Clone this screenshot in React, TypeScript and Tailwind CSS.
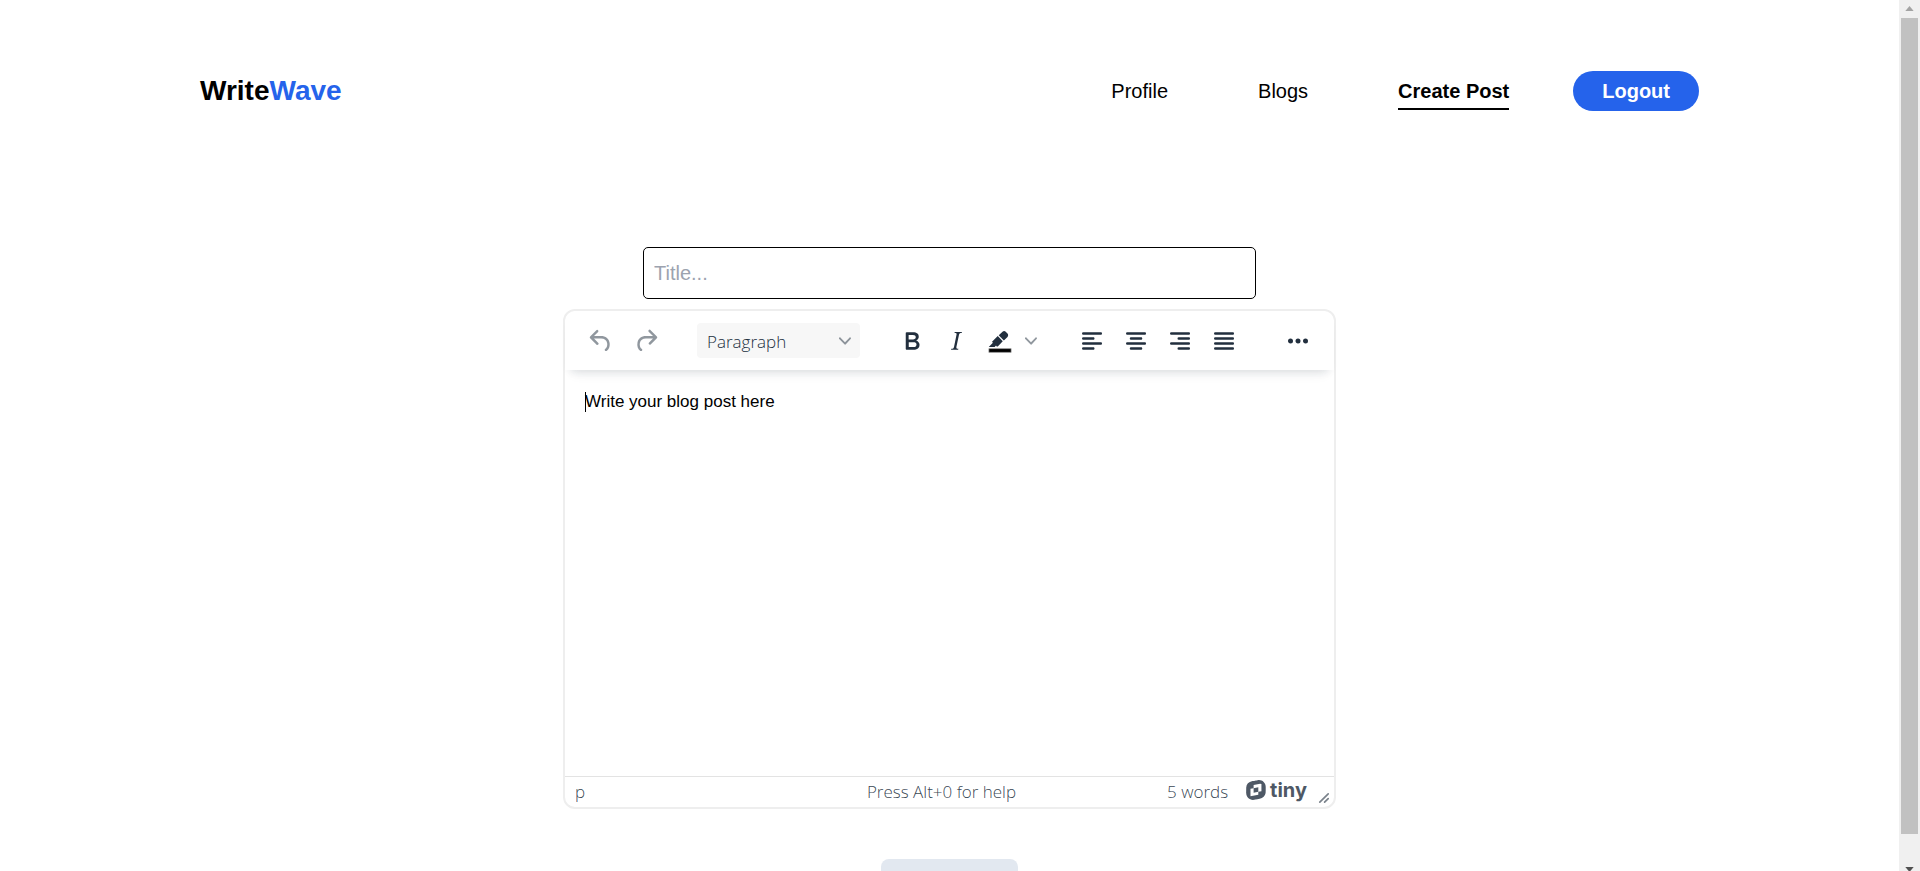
import type { ReactNode } from "react";

const ICONS = {
  undo: "M6.4 8H12c3.7 0 6.2 2 6.8 5.1.6 2.7-.4 5.6-2.3 6.8a1 1 0 0 1-1-1.8c1.1-.6 1.8-2.7 1.4-4.6-.5-2.1-2.1-3.5-4.9-3.5H6.4l3.3 3.3a1 1 0 1 1-1.4 1.4l-5-5a1 1 0 0 1 0-1.4l5-5a1 1 0 0 1 1.4 1.4L6.4 8Z",
  redo: "M17.6 10H12c-2.8 0-4.4 1.4-4.9 3.5-.4 2 .3 4 1.4 4.6a1 1 0 1 1-1 1.8c-2-1.2-2.9-4.1-2.3-6.8.6-3 3-5.1 6.8-5.1h5.6l-3.3-3.3a1 1 0 1 1 1.4-1.4l5 5a1 1 0 0 1 0 1.4l-5 5a1 1 0 0 1-1.4-1.4l3.3-3.3Z",
  bold: "M7.8 19c-.3 0-.5 0-.6-.2l-.2-.5V5.7c0-.2 0-.4.2-.5l.6-.2h5c1.5 0 2.7.3 3.5 1 .7.6 1.1 1.4 1.1 2.5a3 3 0 0 1-.6 1.9c-.4.6-1 1-1.6 1.2.4.1.9.3 1.3.6s.8.7 1 1.2c.4.4.5 1 .5 1.6 0 1.3-.4 2.3-1.3 3-.8.7-2.1 1-3.8 1H7.8Zm5-8.3c.6 0 1.2-.1 1.6-.5.4-.3.6-.7.6-1.3 0-1.1-.8-1.7-2.3-1.7H9.3v3.5h3.4Zm.5 6c.7 0 1.3-.1 1.7-.4.4-.4.6-.9.6-1.5s-.2-1-.7-1.4c-.4-.3-1-.4-2-.4H9.4v3.8h4Z",
  italic:
    "m16.7 4.7-.1.9h-.3c-.6 0-1 0-1.4.3-.3.3-.4.6-.5 1.1l-2.1 9.8v.6c0 .5.4.8 1.4.8h.2l-.2.8H8l.2-.8h.2c1.1 0 1.8-.5 2-1.5l2-9.8.1-.5c0-.6-.4-.8-1.4-.8h-.3l.2-.9h5.8Z",
  left: "M5 5h14c.6 0 1 .4 1 1s-.4 1-1 1H5a1 1 0 1 1 0-2Zm0 4h8c.6 0 1 .4 1 1s-.4 1-1 1H5a1 1 0 1 1 0-2Zm0 8h8c.6 0 1 .4 1 1s-.4 1-1 1H5a1 1 0 0 1 0-2Zm0-4h14c.6 0 1 .4 1 1s-.4 1-1 1H5a1 1 0 0 1 0-2Z",
  center:
    "M5 5h14c.6 0 1 .4 1 1s-.4 1-1 1H5a1 1 0 1 1 0-2Zm3 4h8c.6 0 1 .4 1 1s-.4 1-1 1H8a1 1 0 1 1 0-2Zm0 8h8c.6 0 1 .4 1 1s-.4 1-1 1H8a1 1 0 0 1 0-2Zm-3-4h14c.6 0 1 .4 1 1s-.4 1-1 1H5a1 1 0 0 1 0-2Z",
  right:
    "M5 5h14c.6 0 1 .4 1 1s-.4 1-1 1H5a1 1 0 1 1 0-2Zm6 4h8c.6 0 1 .4 1 1s-.4 1-1 1h-8a1 1 0 0 1 0-2Zm0 8h8c.6 0 1 .4 1 1s-.4 1-1 1h-8a1 1 0 0 1 0-2Zm-6-4h14c.6 0 1 .4 1 1s-.4 1-1 1H5a1 1 0 0 1 0-2Z",
  justify:
    "M5 5h14c.6 0 1 .4 1 1s-.4 1-1 1H5a1 1 0 1 1 0-2Zm0 4h14c.6 0 1 .4 1 1s-.4 1-1 1H5a1 1 0 1 1 0-2Zm0 4h14c.6 0 1 .4 1 1s-.4 1-1 1H5a1 1 0 0 1 0-2Zm0 4h14c.6 0 1 .4 1 1s-.4 1-1 1H5a1 1 0 0 1 0-2Z",
  more: "M6 10a2 2 0 0 0-2 2c0 1.1.9 2 2 2a2 2 0 0 0 2-2 2 2 0 0 0-2-2Zm12 0a2 2 0 0 0-2 2c0 1.1.9 2 2 2a2 2 0 0 0 2-2 2 2 0 0 0-2-2Zm-6 0a2 2 0 0 0-2 2c0 1.1.9 2 2 2a2 2 0 0 0 2-2 2 2 0 0 0-2-2Z",
};

function ToolButton({ label, disabled, children }: { label: string; disabled?: boolean; children: ReactNode }) {
  return (
    <button
      type="button"
      aria-label={label}
      disabled={disabled}
      className="flex h-9 w-11 items-center justify-center text-[#222f3e] disabled:text-[#222f3e]/50"
    >
      {children}
    </button>
  );
}

function Icon({ d }: { d: string }) {
  return (
    <svg viewBox="0 0 24 24" className="size-[30px]" fill="currentColor" aria-hidden="true">
      <path fillRule="evenodd" d={d} />
    </svg>
  );
}

function Chevron() {
  return (
    <svg viewBox="0 0 10 10" className="size-3" fill="currentColor" aria-hidden="true">
      <path d="M8.7 2.2c.3-.3.8-.3 1 0 .4.4.4.9 0 1.2L5.7 7.8c-.3.3-.9.3-1.2 0L.2 3.4a.8.8 0 0 1 0-1.2c.3-.3.8-.3 1.1 0L5 6l3.7-3.8Z" />
    </svg>
  );
}

function Header() {
  return (
    <header className="flex items-center justify-between px-[200px] pt-[71px]">
      <a href="#home" className="text-[28px] leading-10 font-bold">
        Write<span className="text-[#2563eb]">Wave</span>
      </a>
      <nav className="flex items-center text-xl leading-7">
        <a href="#profile" className="mr-[90px]">Profile</a>
        <a href="#blogs" className="mr-[90px]">Blogs</a>
        <a href="#create" aria-current="page" className="mr-16 -mb-[5px] border-b-2 border-black pb-[3px] font-bold">
          Create Post
        </a>
        <button type="button" className="h-10 rounded-full bg-[#2563eb] px-[29px] font-bold text-white">
          Logout
        </button>
      </nav>
    </header>
  );
}

function Toolbar() {
  return (
    <div
      role="toolbar"
      aria-label="Formatting"
      className="flex h-[59px] items-center rounded-t-xl bg-white px-3.5 shadow-[0_6px_8px_-5px_rgba(34,47,62,0.12),0_12px_12px_-8px_rgba(34,47,62,0.07)]"
    >
      <div className="flex gap-px">
        <ToolButton label="Undo" disabled><Icon d={ICONS.undo} /></ToolButton>
        <ToolButton label="Redo" disabled><Icon d={ICONS.redo} /></ToolButton>
      </div>
      <div className="relative ml-[29px] flex items-center font-['Open_Sans',sans-serif]">
        <select
          aria-label="Block format"
          className="h-[35px] w-[163px] appearance-none rounded bg-[#f7f7f7] pt-0.5 pl-2.5 text-[17px] font-light text-[#222f3e]"
        >
          <option>Paragraph</option>
        </select>
        <span className="pointer-events-none absolute right-[9px] text-[#222f3e]/50">
          <Chevron />
        </span>
      </div>
      <div className="ml-[30px] flex">
        <ToolButton label="Bold"><Icon d={ICONS.bold} /></ToolButton>
        <ToolButton label="Italic"><Icon d={ICONS.italic} /></ToolButton>
        <ToolButton label="Background color">
          <svg viewBox="0 0 24 24" className="size-[30px]" fill="currentColor" aria-hidden="true">
            <path d="M3.1 18.1h17.8v3H3.1z" fill="#000" stroke="#9a9a9a" strokeWidth=".5" />
            <path
              fillRule="evenodd"
              d="M7.7 16.7H3l3.3-3.3-.7-.8L10.2 8l4 4.1-4 4.2c-.2.2-.6.2-.8 0l-.6-.7-1.1 1.1zm5-7.5L11 7.4l3-2.9a2 2 0 0 1 2.6 0L18 6c.7.7.7 2 0 2.7l-2.9 2.9-1.8-1.8-.5-.6"
            />
          </svg>
        </ToolButton>
        <button type="button" aria-label="Choose color" className="flex h-9 w-[18px] items-center justify-center text-[#222f3e]/50">
          <Chevron />
        </button>
      </div>
      <div className="ml-[30px] flex">
        <ToolButton label="Align left"><Icon d={ICONS.left} /></ToolButton>
        <ToolButton label="Align center"><Icon d={ICONS.center} /></ToolButton>
        <ToolButton label="Align right"><Icon d={ICONS.right} /></ToolButton>
        <ToolButton label="Justify"><Icon d={ICONS.justify} /></ToolButton>
      </div>
      <div className="ml-auto">
        <ToolButton label="More"><Icon d={ICONS.more} /></ToolButton>
      </div>
    </div>
  );
}

function StatusBar() {
  return (
    <div className="flex h-[31px] items-center border-t border-[#e3e3e3] pr-1 pl-2.5 font-['Open_Sans',sans-serif] text-[17px] font-light text-[#222f3e]/90">
      <span className="flex-1">p</span>
      <span className="mr-[22px]">Press Alt+0 for help</span>
      <div className="flex flex-1 items-center justify-end">
        <span>5 words</span>
        <a href="#tiny" className="ml-[18px] flex items-center gap-1 pb-[5px] font-['Inter',sans-serif] text-xl leading-6 font-bold text-[#4e5865]">
          <svg viewBox="0 0 15.4 15.7" className="size-5" fill="currentColor" aria-hidden="true">
            <path
              fillRule="evenodd"
              d="M10.143 0c2.608.015 5.186 2.178 5.186 5.331 0 0 .077 3.812-.084 4.87-.361 2.41-2.164 4.074-4.65 4.496-1.453.284-2.523.49-3.212.623-.373.071-.634.122-.785.152-.184.038-.997.145-1.35.145-2.732 0-5.21-2.04-5.248-5.33 0 0 0-3.514.03-4.442.093-2.4 1.758-4.342 4.926-4.963 0 0 3.875-.752 4.036-.782.368-.07.775-.1 1.15-.1Zm1.826 2.8L5.83 3.989v2.393l-2.455.475v5.968l6.137-1.189V9.243l2.456-.476V2.8ZM5.83 6.382l3.682-.713v3.574l-3.682.713V6.382Z"
            />
          </svg>
          tiny
        </a>
        <svg viewBox="0 0 10 10" className="mb-[3px] ml-[11px] size-3 self-end text-[#222f3e]/60" fill="currentColor" aria-hidden="true">
          <path d="M8.1 1.1A.5.5 0 1 1 9 2l-7 7A.5.5 0 1 1 1 8l7-7ZM8.1 5.1A.5.5 0 1 1 9 6l-3 3A.5.5 0 1 1 5 8l3-3Z" />
        </svg>
      </div>
    </div>
  );
}

function ScrollTrack() {
  return (
    <div aria-hidden="true" className="flex w-[21px] shrink-0 flex-col items-center bg-[#f0f0f0]">
      <svg viewBox="0 0 10 6" className="mt-1.5 h-[5px] w-[9px]" fill="#a3a3a3">
        <path d="M5 0l5 6H0z" />
      </svg>
      <div className="mt-[7px] mb-[33px] w-[17px] flex-1 bg-[#c1c1c1]" />
      <svg viewBox="0 0 10 6" className="-mb-px h-[5px] w-[9px]" fill="#505050">
        <path d="M5 6l5-6H0z" />
      </svg>
    </div>
  );
}

export default function App() {
  return (
    <div className="flex h-screen bg-white font-['Liberation_Sans',Arial,sans-serif] text-black">
      <div className="min-w-0 flex-1 overflow-hidden">
        <Header />
        <form className="mt-[136px] flex flex-col items-center">
          <input
            type="text"
            aria-label="Title"
            placeholder="Title..."
            className="h-[52px] w-full max-w-[613px] rounded-[5px] border border-black px-2.5 text-xl placeholder:text-[#9ca3af]"
          />
          <section className="mt-2.5 w-full max-w-[773px] rounded-xl border-2 border-[#eeeeee]">
            <Toolbar />
            <div className="h-[406px] px-5 py-[18px] text-[17px] leading-7">
              <div role="textbox" aria-label="Blog post" className="flex items-center">
                <span className="-mr-px h-5 w-px bg-black" />
                Write your blog post here
              </div>
            </div>
            <StatusBar />
          </section>
          <button type="submit" aria-label="Submit" className="mt-[50px] h-[50px] w-[137px] shrink-0 rounded-lg bg-[#e2e8f0]" />
        </form>
      </div>
      <ScrollTrack />
    </div>
  );
}
